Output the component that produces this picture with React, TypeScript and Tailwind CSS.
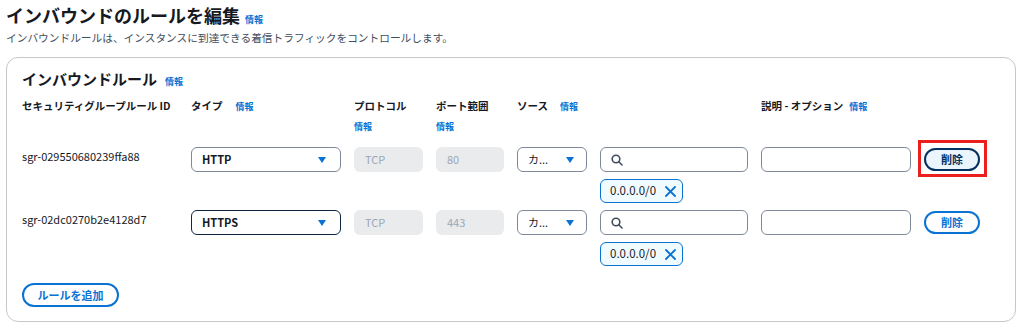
import React from 'react';

const font = { fontFamily: '"Noto Sans CJK JP", "Noto Sans", sans-serif' };

function Info({ className = '' }: { className?: string }) {
    return <span className={`text-[9px] font-bold text-[#0972d3] ${className}`}>情報</span>;
}

function Caret() {
    return (
        <svg width="8" height="6" viewBox="0 0 8 6" className="shrink-0">
            <polygon points="0,0 8,0 4,6" fill="#0972d3" />
        </svg>
    );
}

function SearchIcon() {
    return (
        <svg width="12" height="12" viewBox="0 0 12 12" fill="none" stroke="#414d5c" strokeWidth="1.6" strokeLinecap="round">
            <circle cx="5" cy="5" r="3.8" />
            <line x1="7.8" y1="7.8" x2="11" y2="11" />
        </svg>
    );
}

function XIcon() {
    return (
        <svg width="11" height="11" viewBox="0 0 11 11" fill="none" stroke="#0972d3" strokeWidth="1.8" strokeLinecap="round">
            <line x1="1" y1="1" x2="10" y2="10" />
            <line x1="10" y1="1" x2="1" y2="10" />
        </svg>
    );
}

type Rule = { id: string; type: string; port: string; focused: boolean; highlighted: boolean };

const rules: Rule[] = [
    { id: 'sgr-029550680239ffa88', type: 'HTTP', port: '80', focused: false, highlighted: true },
    { id: 'sgr-02dc0270b2e4128d7', type: 'HTTPS', port: '443', focused: true, highlighted: false },
];

const cols = 'grid grid-cols-[156px_150px_69px_68px_70px_148px_150px_56px] gap-x-[13px]';

function RuleRow({ rule }: { rule: Rule }) {
    return (
        <div className={`${cols} items-start`}>
            <div className="text-[11px] leading-4 pt-[1px] text-[#16191f] whitespace-nowrap">{rule.id}</div>
            <div
                className={`h-[25px] rounded-[6px] flex items-center justify-between pl-[10px] pr-[14px] ${
                    rule.focused ? 'border-[1.5px] border-[#0f2540]' : 'border-[1.5px] border-[#7d8998]'
                }`}
            >
                <span className="text-[11px] font-semibold text-[#16191f]">{rule.type}</span>
                <Caret />
            </div>
            <div className="h-[25px] rounded-[6px] bg-[#e9ebed] flex items-center pl-[11px] text-[11px] text-[#9ba7b6]">TCP</div>
            <div className="h-[25px] rounded-[6px] bg-[#e9ebed] flex items-center pl-[11px] text-[11px] text-[#9ba7b6]">{rule.port}</div>
            <div className="h-[25px] rounded-[6px] border-[1.5px] border-[#7d8998] flex items-center justify-between pl-[10px] pr-[12px]">
                <span className="text-[11px] text-[#16191f]">カ...</span>
                <Caret />
            </div>
            <div className="flex flex-col items-start gap-[7px]">
                <div className="w-full h-[25px] rounded-[6px] border-[1.5px] border-[#7d8998] flex items-center pl-[10px]">
                    <SearchIcon />
                </div>
                <div className="h-[24px] rounded-[6px] border-[1.5px] border-[#0972d3] bg-[#f0fbff] flex items-center gap-[9px] pl-[9px] pr-[6px]">
                    <span className="text-[11.5px] text-[#16191f]">0.0.0.0/0</span>
                    <XIcon />
                </div>
            </div>
            <div className="h-[25px] rounded-[6px] border-[1.5px] border-[#7d8998]" />
            <div className="relative h-[25px] flex items-center">
                {rule.highlighted ? (
                    <>
                        <button className="w-[56px] h-[23px] rounded-full border-2 border-[#033160] bg-[#eaf5fd] text-[11px] font-bold text-[#033160]">
                            削除
                        </button>
                        <div className="absolute left-[-6px] right-[-7px] top-[-7px] bottom-[-5px] border-[3px] border-[#ec1f1f]" />
                    </>
                ) : (
                    <button className="w-[56px] h-[23px] rounded-full border-2 border-[#0972d3] bg-white text-[11px] font-bold text-[#0972d3]">
                        削除
                    </button>
                )}
            </div>
        </div>
    );
}

export default function App() {
    return (
        <div className="w-[1024px] h-[327px] bg-white text-[#16191f] overflow-hidden" style={font}>
            <div className="pl-[6px] pt-[3px]">
                <div className="flex items-baseline gap-[5px]">
                    <h1 className="text-[18px] leading-6 font-bold">インバウンドのルールを編集</h1>
                    <Info className="text-[9.5px]" />
                </div>
                <p className="mt-[4px] text-[10.7px] leading-[14px] text-[#414d5c]">
                    インバウンドルールは、インスタンスに到達できる着信トラフィックをコントロールします。
                </p>
            </div>

            <div className="ml-[6px] mt-[12px] w-[1010px] h-[265px] rounded-[12px] border border-[#c6c6cd] pl-[15px] pt-[11px]">
                <div className="flex items-baseline gap-[8px] h-[20px]">
                    <h2 className="text-[15px] leading-5 font-bold">インバウンドルール</h2>
                    <Info />
                </div>

                <div className={`${cols} mt-[9px] text-[10.5px] font-bold leading-4`}>
                    <div className="whitespace-nowrap">セキュリティグループルール ID</div>
                    <div className="flex items-baseline gap-[13px]">
                        <span>タイプ</span>
                        <Info />
                    </div>
                    <div className="flex flex-col gap-[5px]">
                        <span>プロトコル</span>
                        <Info className="leading-4" />
                    </div>
                    <div className="flex flex-col gap-[5px]">
                        <span>ポート範囲</span>
                        <Info className="leading-4" />
                    </div>
                    <div className="col-span-2 flex items-baseline gap-[12px]">
                        <span>ソース</span>
                        <Info />
                    </div>
                    <div className="flex items-baseline gap-[6px] whitespace-nowrap">
                        <span>説明 - オプション</span>
                        <Info />
                    </div>
                    <div />
                </div>

                <div className="mt-[12px] flex flex-col gap-[7px]">
                    {rules.map(r => (
                        <RuleRow key={r.id} rule={r} />
                    ))}
                </div>

                <button className="mt-[17px] w-[97px] h-[24px] rounded-full border-2 border-[#0972d3] text-[11px] font-bold text-[#0972d3]">
                    ルールを追加
                </button>
            </div>
        </div>
    );
}
